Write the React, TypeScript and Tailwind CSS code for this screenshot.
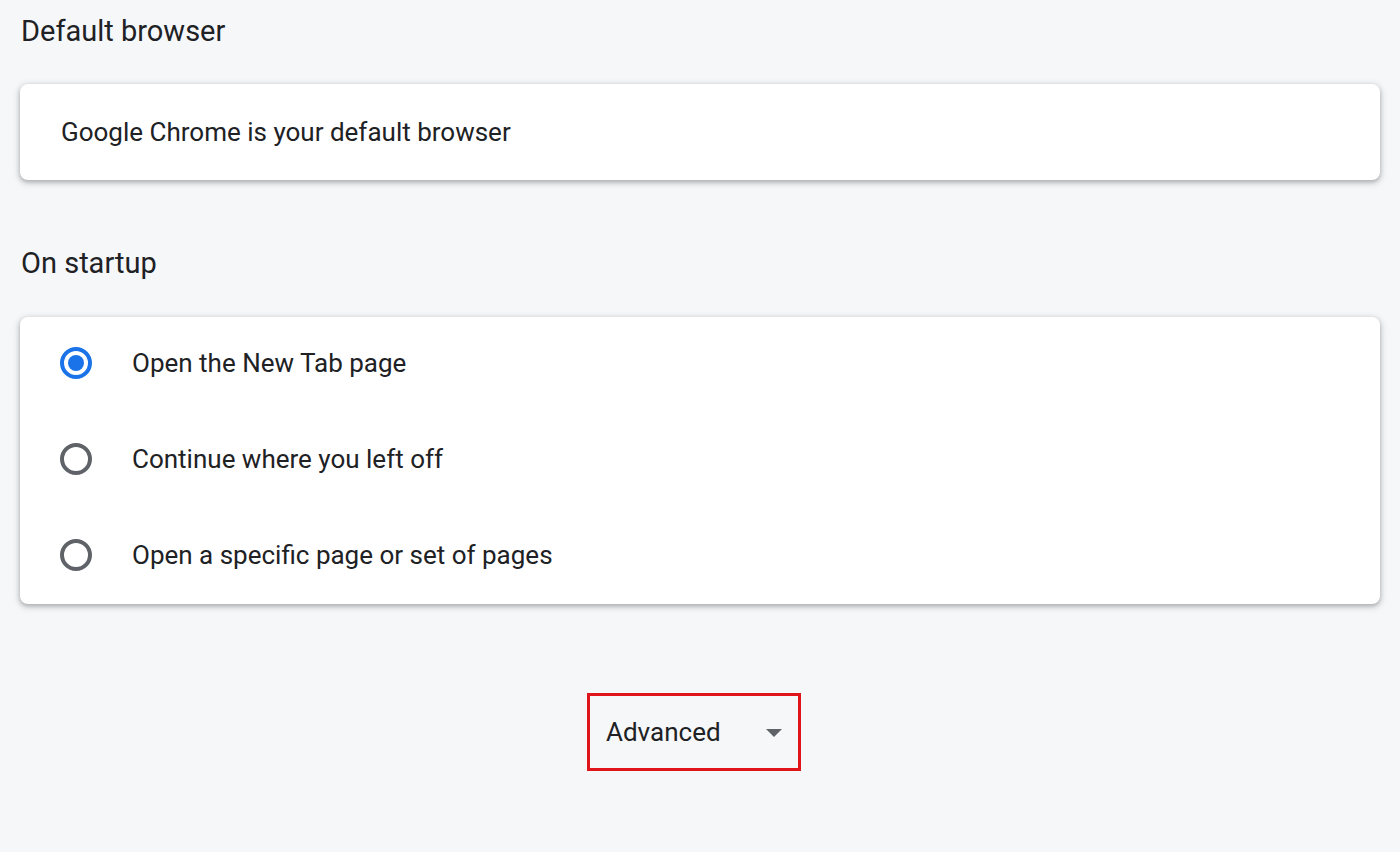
import React from "react";

function Radio({ checked }: { checked: boolean }) {
  return (
    <svg width="34" height="34" viewBox="0 0 34 34" className="shrink-0">
      {checked ? (
        <>
          <circle cx="17" cy="17" r="14" fill="none" stroke="#1a73e8" strokeWidth="4" />
          <circle cx="17" cy="17" r="8" fill="#1a73e8" />
        </>
      ) : (
        <circle cx="17" cy="17" r="14" fill="none" stroke="#5f6368" strokeWidth="4" />
      )}
    </svg>
  );
}

const card =
  "bg-white rounded-[8px] shadow-[0_2px_4px_0_rgba(60,64,67,0.3),0_2px_6px_2px_rgba(60,64,67,0.15)]";

export default function App() {
  const options = [
    { label: "Open the New Tab page", checked: true },
    { label: "Continue where you left off", checked: false },
    { label: "Open a specific page or set of pages", checked: false },
  ];
  return (
    <div
      className="w-[1400px] h-[852px] bg-[#f6f7f9] px-[20px] text-[#202124] overflow-hidden"
      style={{ fontFamily: "Roboto, 'Liberation Sans', sans-serif" }}
    >
      <div className="h-[64px] flex items-center text-[29px] pl-[1px]">Default browser</div>
      <div className={`${card} mt-[20px] h-[96px] flex items-center pl-[41px] text-[26px]`}>
        Google Chrome is your default browser
      </div>
      <div className="mt-[52px] h-[64px] flex items-center text-[29px] pl-[1px]">On startup</div>
      <div className={`${card} mt-[21px] flex flex-col pb-[1px]`}>
        {options.map((o, i) => (
          <div
            key={i}
            className={`h-[96px] flex items-center pl-[39px] ${i === 0 ? "-mt-[2px]" : ""}`}
          >
            <Radio checked={o.checked} />
            <span className="ml-[39px] text-[26px]">{o.label}</span>
          </div>
        ))}
      </div>
      <div className="flex justify-center mt-[89px]">
        <div className="ml-[-12px] w-[214px] h-[78px] border-[3px] border-[#e0151b] flex items-center pl-[16px]">
          <span className="text-[26px]">Advanced</span>
          <svg width="18" height="10" viewBox="0 0 18 10" className="ml-[44px] mt-[2px]">
            <path d="M1 1 L17 1 L9 9 Z" fill="#5f6368" />
          </svg>
        </div>
      </div>
    </div>
  );
}
